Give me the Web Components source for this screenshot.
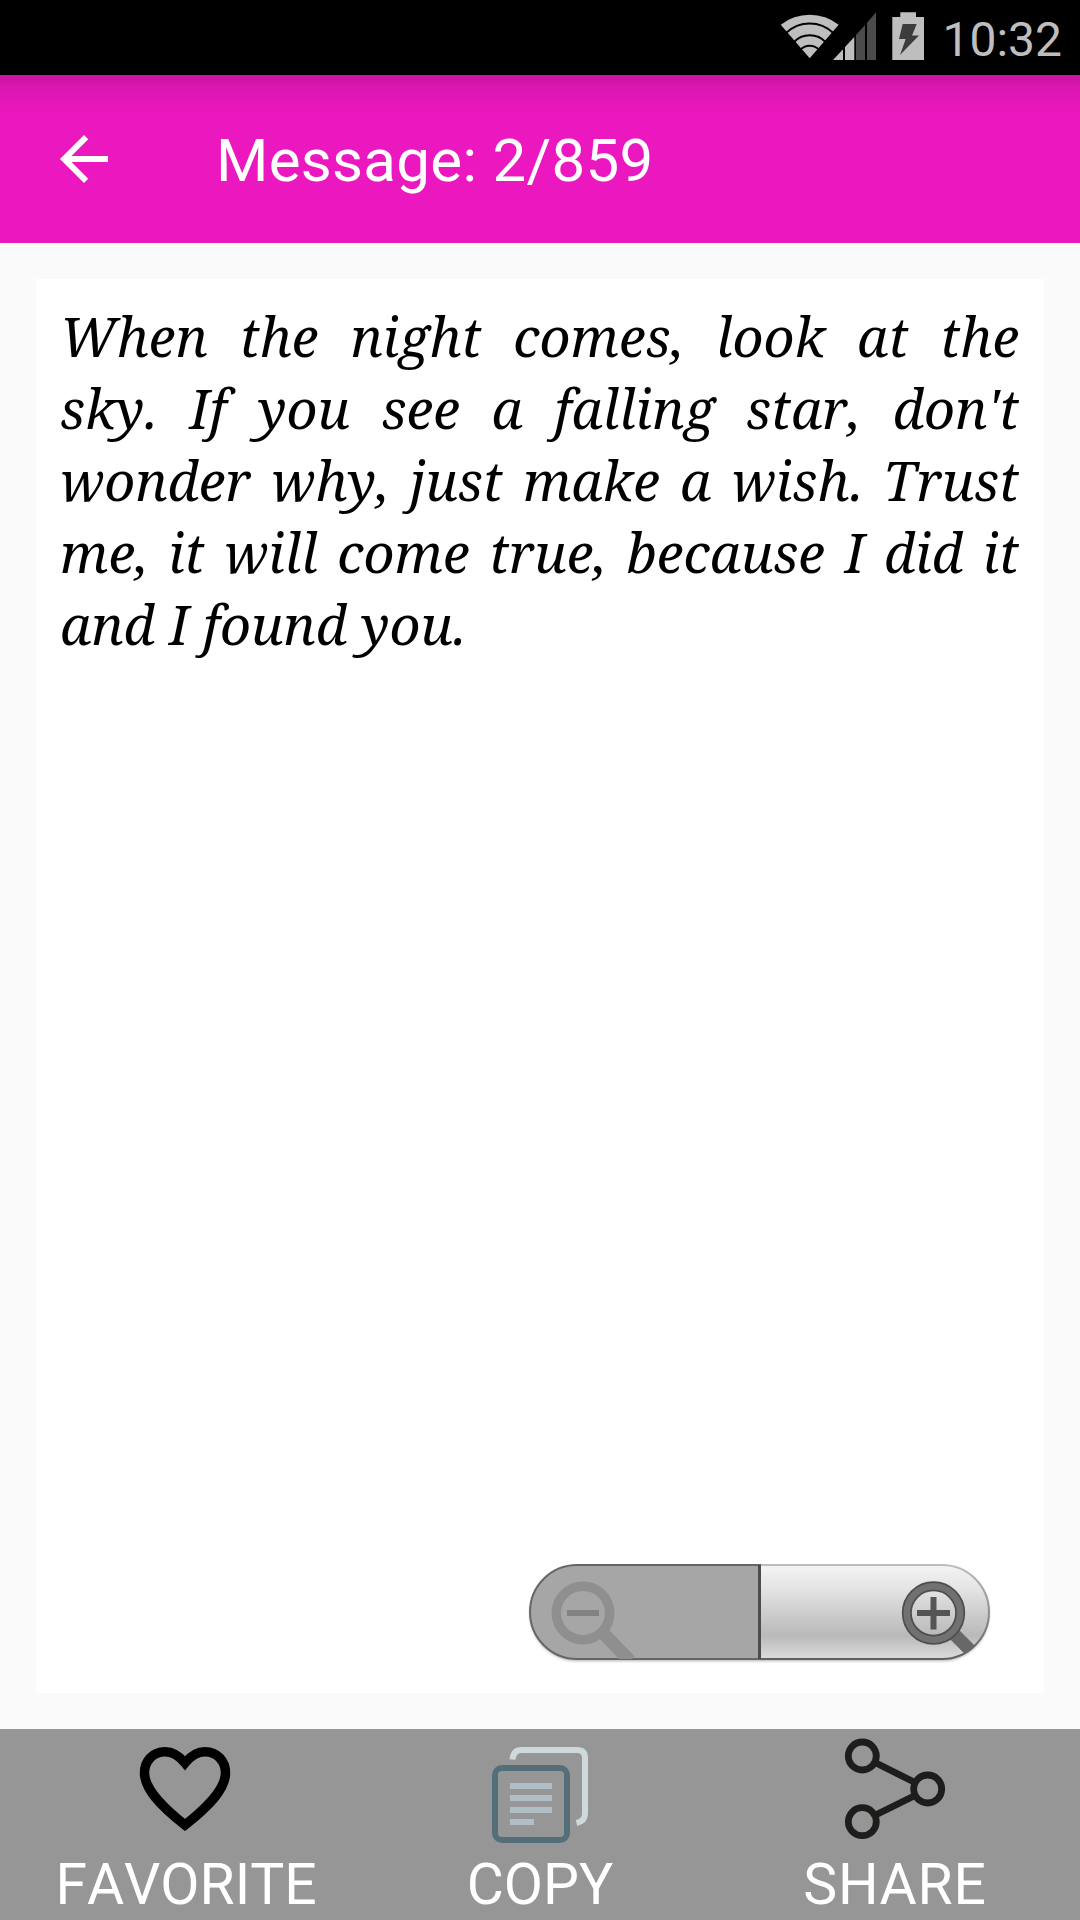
<!DOCTYPE html>
<html lang="en">
<head>
<meta charset="utf-8">
<title>Message</title>
<style>
  body {
    margin: 0;
    background: #fafafa;
    font-family: Roboto, "Noto Sans", sans-serif;
    font-kerning: none;
  }
</style>
</head>
<body>
<message-screen>
  <status-bar slot="status" time="10:32"></status-bar>
  <app-bar slot="header">Message: 2/859</app-bar>
  <message-card>When the night comes, look at the sky. If you see a falling star, don't wonder why, just make a wish. Trust me, it will come true, because I did it and I found you.</message-card>
  <action-bar slot="footer">
    <action-button icon="heart">FAVORITE</action-button>
    <action-button icon="copy">COPY</action-button>
    <action-button icon="share">SHARE</action-button>
  </action-bar>
</message-screen>

<script>
  const icons = {
    heart: `
      <path d="M60 34C55 28 48 22.8 40 22.8C28 22.8 19.5 32 19.5 44C19.5 60 36 77 60 96C84 77 100.5 60 100.5 44C100.5 32 92 22.8 80 22.8C72 22.8 65 28 60 34Z" fill="none" stroke="#000" stroke-width="9.5"/>`,
    copy: `
      <path d="M32.5 30.5Q33.5 21 41 21H97Q105 21 105 29V85Q105 92 96.5 94" fill="none" stroke="#cfd8dc" stroke-width="6"/>
      <rect x="15" y="39" width="72" height="72" rx="7" fill="none" stroke="#546e7a" stroke-width="6"/>
      <path d="M30 57H72M30 69H72M30 81H72M30 93H54" stroke="#b0bec5" stroke-width="6"/>`,
    share: `
      <g fill="none" stroke="#1d1d1b" stroke-width="6.8">
        <circle cx="27.3" cy="27" r="14"/>
        <circle cx="92.7" cy="60" r="14"/>
        <circle cx="27.3" cy="92.7" r="14"/>
        <path d="M40 33.5L80 53.5M40 86.3L80 66.5"/>
      </g>`
  };

  class StatusBar extends HTMLElement {
    constructor() {
      super();
      const time = this.getAttribute('time') || '';
      this.attachShadow({ mode: 'open' }).innerHTML = `
        <style>
          :host {
            display: flex;
            justify-content: flex-end;
            height: 75px;
            padding-right: 18px;
            background: #000;
            color: #bebebe;
          }
          svg { display: block; overflow: visible; fill: #bebebe; }
          .signal { margin-right: 16px; }
          .battery { margin-right: 18px; }
          time { font-size: 48px; line-height: 56px; padding-top: 12px; }
        </style>
        <svg class="wifi" width="53" height="75">
          <path d="M.7 24.7A47 47 0 0 1 58.7 24.7L29.7 58.3Z"/>
          <g fill="none" stroke="#000" stroke-width="2">
            <path d="M6 33A34 34 0 0 1 53.3 33M13.5 42.5A22 22 0 0 1 46 42.5M20 50.2A13 13 0 0 1 39.4 50.2"/>
          </g>
        </svg>
        <svg class="signal" width="43" height="75">
          <path d="M0 60L10 49.2V60ZM12 47L21.3 37V60H12Z"/>
          <path d="M23 35L32 25V60H23ZM34 22.7L43 12.3V60H34Z" fill="#4b4b4b"/>
        </svg>
        <svg class="battery" width="32" height="75">
          <path d="M.3 17H8.3V12.2H24V17H32V60H.3Z"/>
          <path d="M10.7 24H24.7L20 35.5H27L8 55L13.7 39H7Z" fill="#3c3c3c"/>
        </svg>
        <time>${time}</time>
      `;
    }
  }

  class AppBar extends HTMLElement {
    constructor() {
      super();
      this.attachShadow({ mode: 'open' }).innerHTML = `
        <style>
          :host {
            display: flex;
            align-items: center;
            height: 168px;
            box-sizing: border-box;
            padding-left: 48px;
            gap: 96px;
            background: linear-gradient(#c814a3 0, #d716af 10px, #e217b8 22px, #eb18bf 42px);
            color: #fff;
            font-size: 60px;
            line-height: 72px;
            letter-spacing: .3px;
          }
          span { padding-top: 4px; }
        </style>
        <svg width="72" height="72" viewBox="0 0 24 24">
          <path d="M20 11H7.83l5.59-5.59L12 4l-8 8 8 8 1.41-1.41L7.83 13H20z" fill="#fff"/>
        </svg>
        <span><slot></slot></span>
      `;
    }
  }

  class ZoomControls extends HTMLElement {
    constructor() {
      super();
      this.attachShadow({ mode: 'open' }).innerHTML = `
        <style>
          :host { display: block; width: 461px; height: 98px; }
          svg { display: block; overflow: visible; }
        </style>
        <svg width="461" height="98">
          <defs>
            <linearGradient id="face" x1="0" y1="0" x2="0" y2="1">
              <stop offset="0" stop-color="#f4f4f4"/>
              <stop offset=".25" stop-color="#e4e4e4"/>
              <stop offset=".75" stop-color="#b9b9b9"/>
              <stop offset="1" stop-color="#dcdcdc"/>
            </linearGradient>
            <linearGradient id="edge" x1="0" y1="0" x2="0" y2="1">
              <stop offset="0" stop-color="#bdbdbd"/>
              <stop offset="1" stop-color="#606060"/>
            </linearGradient>
            <clipPath id="pill"><rect x="1" y="1" width="459" height="94" rx="47"/></clipPath>
            <filter id="soft" x="-5%" y="-20%" width="110%" height="140%"><feGaussianBlur stdDeviation="1.5"/></filter>
          </defs>
          <rect x="1" y="3" width="459" height="94" rx="47" fill="#000" opacity=".3" filter="url(#soft)"/>
          <path d="M231 1H413A47 47 0 0 1 413 95H231Z" fill="url(#face)" stroke="url(#edge)" stroke-width="2"/>
          <path d="M231 1H48A47 47 0 0 0 48 95H231Z" fill="#a6a6a6" stroke="#666" stroke-width="2"/>
          <path d="M230.5 1V95" stroke="#4c4c4c" stroke-width="3"/>
          <g clip-path="url(#pill)" fill="none">
            <circle cx="54" cy="49" r="26.7" stroke="#8f8f8f" stroke-width="9.5"/>
            <path d="M75 70L101 97" stroke="#8f8f8f" stroke-width="13"/>
            <path d="M38 49H70" stroke="#828282" stroke-width="6"/>
            <path d="M425 70L450 95" stroke="#686868" stroke-width="13"/>
            <circle cx="404.5" cy="49" r="26.7" stroke="#4e4e4e" stroke-width="10"/>
            <circle cx="404.5" cy="49" r="26.7" stroke="#717171" stroke-width="6.5"/>
            <path d="M388 49H421M404.5 33V65.5" stroke="#555" stroke-width="6"/>
          </g>
        </svg>
      `;
    }
  }

  class MessageCard extends HTMLElement {
    constructor() {
      super();
      this.attachShadow({ mode: 'open' }).innerHTML = `
        <style>
          :host {
            display: flex;
            flex-direction: column;
            justify-content: space-between;
            box-sizing: border-box;
            padding: 21px 25px 31px 24px;
            background: #fff;
            color: #000;
          }
          p {
            margin: 0;
            font-family: "Noto Serif", "Droid Serif", "DejaVu Serif", serif;
            font-size: 54px;
            font-style: italic;
            line-height: 72px;
            text-align: justify;
          }
          zoom-controls { align-self: flex-end; margin-right: 29px; }
        </style>
        <p><slot></slot></p>
        <zoom-controls></zoom-controls>
      `;
    }
  }

  class ActionButton extends HTMLElement {
    constructor() {
      super();
      this.attachShadow({ mode: 'open' }).innerHTML = `
        <style>
          :host {
            display: flex;
            flex-direction: column;
            align-items: center;
            color: #fff;
            font-size: 57px;
            line-height: 68px;
          }
          :host([icon="heart"]) span { padding-left: 2px; }
          :host([icon="share"]) span { letter-spacing: .9px; }
          svg { display: block; }
          span { padding-top: 2px; }
        </style>
        <svg width="120" height="120">${icons[this.getAttribute('icon')] || ''}</svg>
        <span><slot></slot></span>
      `;
    }
  }

  class ActionBar extends HTMLElement {
    constructor() {
      super();
      this.attachShadow({ mode: 'open' }).innerHTML = `
        <style>
          :host {
            display: grid;
            grid-template-columns: 370px 340px 370px;
            height: 191px;
            overflow: hidden;
            background: #969696;
          }
        </style>
        <slot></slot>
      `;
    }
  }

  class MessageScreen extends HTMLElement {
    constructor() {
      super();
      this.attachShadow({ mode: 'open' }).innerHTML = `
        <style>
          :host {
            display: flex;
            flex-direction: column;
            width: 1080px;
            height: 1920px;
            overflow: hidden;
          }
          main { flex: 1; display: grid; padding: 36px; min-height: 0; }
        </style>
        <slot name="status"></slot>
        <slot name="header"></slot>
        <main><slot></slot></main>
        <slot name="footer"></slot>
      `;
    }
  }

  customElements.define('status-bar', StatusBar);
  customElements.define('app-bar', AppBar);
  customElements.define('zoom-controls', ZoomControls);
  customElements.define('message-card', MessageCard);
  customElements.define('action-button', ActionButton);
  customElements.define('action-bar', ActionBar);
  customElements.define('message-screen', MessageScreen);
</script>
</body>
</html>
